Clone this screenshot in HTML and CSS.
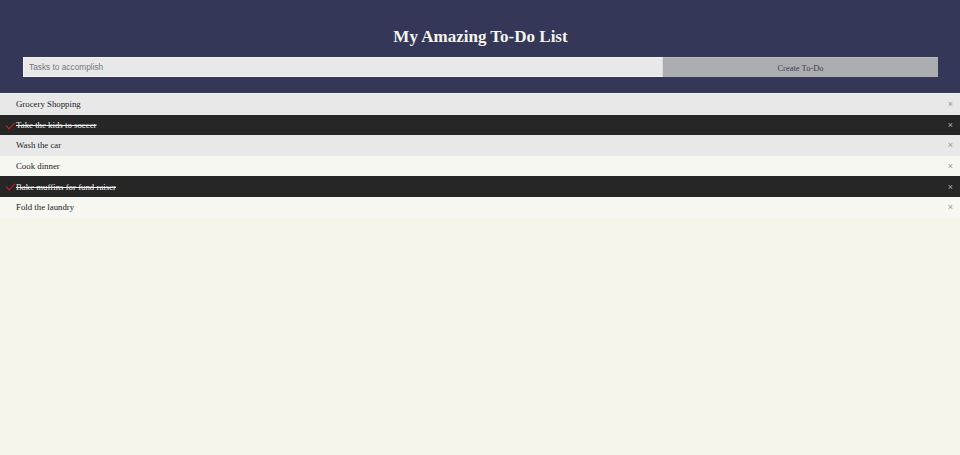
FILE: index.html
```html
<!DOCTYPE html>
<html>
<head>
<meta charset="utf-8">
<link rel="stylesheet" href="styles.css">
</head>
<body>
<div class="header">
  <h2 class="title">My Amazing To-Do List</h2>
  <div class="form">
    <input class="task-input" type="text" placeholder="Tasks to accomplish">
    <span class="add-btn">Create To-Do</span>
  </div>
</div>
<ul class="list">
  <li class="item odd">Grocery Shopping<span class="close">×</span></li>
  <li class="item checked">Take the kids to soccer<span class="close">×</span></li>
  <li class="item odd">Wash the car<span class="close">×</span></li>
  <li class="item even">Cook dinner<span class="close">×</span></li>
  <li class="item checked">Bake muffins for fund raiser<span class="close">×</span></li>
  <li class="item even">Fold the laundry<span class="close">×</span></li>
</ul>
</body>
</html>
```
FILE: styles.css
```css
html, body {
  margin: 0;
  padding: 0;
  background: #f6f5e9;
  font-family: "Liberation Serif", "Times New Roman", serif;
}
.header {
  background: #343757;
  height: 93px;
  box-sizing: border-box;
  padding: 26px 22px 0 23px;
  display: flex;
  flex-direction: column;
  align-items: stretch;
}
.title {
  margin: 0;
  text-align: center;
  color: #f4f4ee;
  font-size: 17px;
  font-weight: bold;
  line-height: 21px;
}
.form {
  margin-top: 10px;
  display: flex;
  height: 20px;
}
.task-input {
  width: 640px;
  box-sizing: border-box;
  height: 20px;
  margin: 0;
  border: 1px solid #f2f2f2;
  border-right-color: #d8d8d8;
  background: #e8e8e8;
  padding: 0 5px;
  font-family: "Liberation Sans", Arial, sans-serif;
  font-size: 8.3px;
  color: #333;
  outline: none;
}
.task-input::placeholder {
  color: #777;
}
.add-btn {
  flex: 1;
  box-sizing: border-box;
  height: 20px;
  background: #acadb1;
  border-top: 1px solid #b8b9bc;
  color: #3e3f4e;
  font-size: 8.5px;
  display: flex;
  align-items: center;
  justify-content: center;
}
.list {
  list-style: none;
  margin: 0;
  padding: 0;
  border-top: 1px solid #f2f2f2;
}
.item {
  position: relative;
  height: 20.6px;
  display: flex;
  align-items: center;
  padding-left: 16px;
  font-size: 8.8px;
  color: #1e1e1e;
}
.odd { background: #e8e8e8; }
.even { background: #f5f7f0; }
.checked {
  background: #262626;
  color: #f2f2f2;
  text-decoration: line-through;
}
.checked::before {
  content: "";
  position: absolute;
  left: 8px;
  top: 5px;
  width: 4px;
  height: 8px;
  border-width: 0 1.5px 1.5px 0;
  border-style: solid;
  border-color: transparent #d81e1e #d81e1e transparent;
  transform: rotate(45deg);
}
.close {
  position: absolute;
  right: 7px;
  top: 0;
  height: 100%;
  display: flex;
  align-items: center;
  font-family: "Liberation Sans", Arial, sans-serif;
  font-size: 9px;
  color: #8a9a9a;
  text-decoration: none;
}
.checked .close { color: #a8b8b8; }
```
